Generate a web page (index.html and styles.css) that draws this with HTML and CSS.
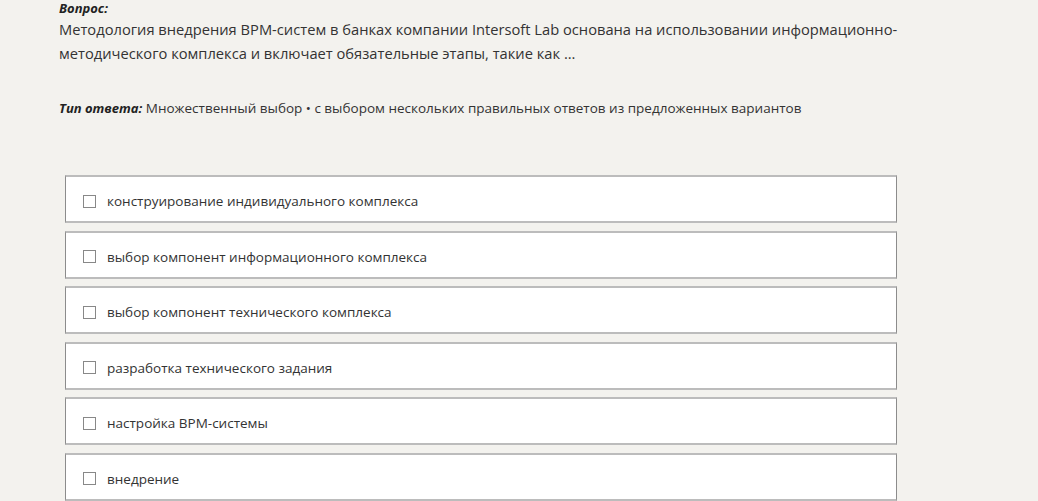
FILE: index.html
```html
<html>
<head>
    <title>Вопрос</title>
    <link rel="stylesheet" href="styles.css">
</head>
<body>
<div class="question">
    <div class="label">Вопрос:</div>
    <div class="text">Методология внедрения BPM-систем в банках компании Intersoft Lab основана на использовании информационно-методического комплекса и включает обязательные этапы, такие как ...</div>
    <div class="type"><span class="label">Тип ответа:</span> Множественный выбор • с выбором нескольких правильных ответов из предложенных вариантов</div>
</div>
<div class="answers">
    <label class="answer"><span class="box"></span>конструирование индивидуального комплекса</label>
    <label class="answer"><span class="box"></span>выбор компонент информационного комплекса</label>
    <label class="answer"><span class="box"></span>выбор компонент технического комплекса</label>
    <label class="answer"><span class="box"></span>разработка технического задания</label>
    <label class="answer"><span class="box"></span>настройка BPM-системы</label>
    <label class="answer"><span class="box"></span>внедрение</label>
</div>
</body>
</html>
```

FILE: styles.css
```css
body {
    font-family: "Open Sans", "Noto Sans", sans-serif;
    margin: 0;
    padding: 0 0 0 59px;
    background-color: #f3f2ee;
    color: #333;
    overflow: hidden;
}
.question {
    margin-top: -1px;
    width: 860px;
}
.label {
    font-weight: bold;
    font-style: italic;
    font-size: 13px;
    color: #222;
}
.question > .label {
    line-height: 18px;
}
.text {
    font-size: 14.7px;
    line-height: 24px;
}
.type {
    font-size: 13.5px;
    margin-top: 34px;
    line-height: 18px;
}
.type .label {
    font-size: 13px;
}
.answers {
    margin-top: 58px;
    margin-left: 6px;
    width: 832px;
    display: flex;
    flex-direction: column;
    gap: 7.6px;
}
.answer {
    display: flex;
    align-items: center;
    height: 40px;
    padding: 4px 0 0 17px;
    background: white;
    border-top: 2px solid #bcbcbc;
    border-bottom: 2px solid #bcbcbc;
    border-left: 1px solid #8c8c8c;
    border-right: 1px solid #8c8c8c;
    font-size: 13.5px;
    color: #333;
}
.box {
    width: 11px;
    height: 11px;
    border: 1px solid #888;
    margin-right: 11px;
}
```
